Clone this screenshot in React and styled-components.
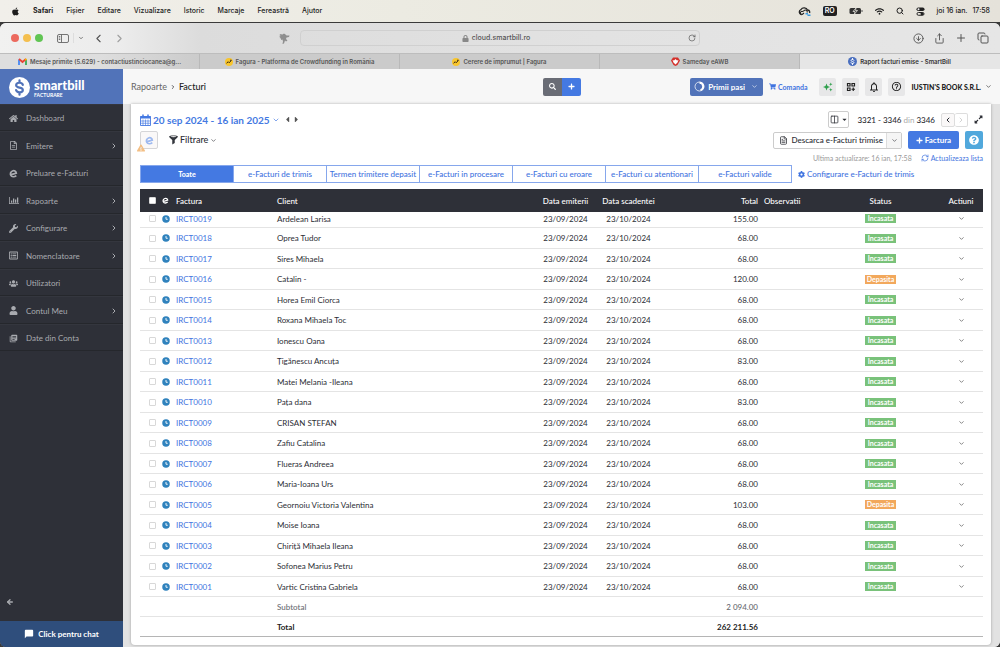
import React from 'react';
import styled, { createGlobalStyle } from 'styled-components';
import {
  FaApple, FaHome, FaRegFileAlt, FaWrench, FaRegListAlt, FaUsers, FaUser,
  FaSearch, FaPlus, FaShoppingCart, FaCaretLeft, FaCaretRight, FaCaretDown, FaExpandAlt,
  FaQuestionCircle, FaCog, FaExclamationTriangle, FaWifi, FaLock,
} from 'react-icons/fa';
import { MdLibraryBooks, MdChatBubble, MdHelpOutline, MdNotificationsNone } from 'react-icons/md';
import {
  ChevronDown, ChevronLeft, ChevronRight, ArrowLeft, RotateCw, RefreshCw,
  CircleArrowDown, Share, Plus, Copy, Columns2, FileText, Search,
} from 'lucide-react';

const menus = ['Fișier', 'Editare', 'Vizualizare', 'Istoric', 'Marcaje', 'Fereastră', 'Ajutor'];

const navItems = [
  { label: 'Dashboard', icon: <FaHome /> },
  { label: 'Emitere', icon: <FaRegFileAlt />, more: true },
  { label: 'Preluare e-Facturi', icon: <LetterE /> },
  { label: 'Rapoarte', icon: <BarsIcon />, more: true },
  { label: 'Configurare', icon: <FaWrench />, more: true },
  { label: 'Nomenclatoare', icon: <FaRegListAlt />, more: true },
  { label: 'Utilizatori', icon: <FaUsers /> },
  { label: 'Contul Meu', icon: <FaUser />, more: true },
  { label: 'Date din Conta', icon: <MdLibraryBooks /> },
];

const filters = [
  'Toate',
  'e-Facturi de trimis',
  'Termen trimitere depasit',
  'e-Facturi in procesare',
  'e-Facturi cu eroare',
  'e-Facturi cu atentionari',
  'e-Facturi valide',
];

const invoices = [
  ['IRCT0019', 'Ardelean Larisa', '155.00'],
  ['IRCT0018', 'Oprea Tudor', '68.00'],
  ['IRCT0017', 'Sires Mihaela', '68.00'],
  ['IRCT0016', 'Catalin -', '120.00', 'Depasita'],
  ['IRCT0015', 'Horea Emil Ciorca', '68.00'],
  ['IRCT0014', 'Roxana Mihaela Toc', '68.00'],
  ['IRCT0013', 'Ionescu Oana', '68.00'],
  ['IRCT0012', 'Țigănescu Ancuța', '83.00'],
  ['IRCT0011', 'Matei Melania -Ileana', '68.00'],
  ['IRCT0010', 'Pața dana', '83.00'],
  ['IRCT0009', 'CRISAN STEFAN', '68.00'],
  ['IRCT0008', 'Zafiu Catalina', '68.00'],
  ['IRCT0007', 'Flueras Andreea', '68.00'],
  ['IRCT0006', 'Maria-Ioana Urs', '68.00'],
  ['IRCT0005', 'Geornoiu Victoria Valentina', '103.00', 'Depasita'],
  ['IRCT0004', 'Moise Ioana', '68.00'],
  ['IRCT0003', 'Chiriță Mihaela Ileana', '68.00'],
  ['IRCT0002', 'Sofonea Marius Petru', '68.00'],
  ['IRCT0001', 'Vartic Cristina Gabriela', '68.00'],
];

export default function App() {
  return (
    <>
      <GlobalStyle />
      <Desktop>
        <MenuBar />
        <Window>
          <BrowserBar />
          <BrowserTabs />
          <Shell>
            <Sidebar />
            <Main>
              <TopBar />
              <Stage>
                <Card>
                  <Toolbar />
                  <FilterTabs />
                  <InvoiceTable />
                </Card>
              </Stage>
            </Main>
          </Shell>
        </Window>
      </Desktop>
    </>
  );
}

function MenuBar() {
  return (
    <MacBar>
      <MacMenus>
        <FaApple size={9} />
        <b>Safari</b>
        {menus.map((m) => <span key={m}>{m}</span>)}
      </MacMenus>
      <MacStatus>
        <CloudIcon />
        <Lang>RO</Lang>
        <BatteryIcon />
        <FaWifi size={9} />
        <Search size={8} strokeWidth={3} />
        <ControlIcon />
        <Clock><span>joi 16 ian.</span><span>17:58</span></Clock>
      </MacStatus>
    </MacBar>
  );
}

function BrowserBar() {
  return (
    <SafariBar>
      <SafariSide>
        <Lights>
          <Light $color="#ec6a5e" />
          <Light $color="#f4bf4f" />
          <Light $color="#61c554" />
        </Lights>
        <PlainButton aria-label="Bară laterală"><PanelIcon /></PlainButton>
        <Divider />
        <ChevronDown size={6} strokeWidth={3} />
        <NavArrows>
          <PlainButton aria-label="Înapoi"><ChevronLeft size={13} /></PlainButton>
          <PlainButton aria-label="Înainte" $faded><ChevronRight size={13} /></PlainButton>
        </NavArrows>
        <BirdSlot><BirdIcon /></BirdSlot>
      </SafariSide>
      <Address>
        <AddressText><FaLock size={7} />cloud.smartbill.ro</AddressText>
        <RotateCw size={8} />
      </Address>
      <SafariSide $end>
        <PlainButton aria-label="Descărcări"><CircleArrowDown size={11} strokeWidth={2} /></PlainButton>
        <PlainButton aria-label="Partajează"><Share size={11} strokeWidth={2} /></PlainButton>
        <PlainButton aria-label="Filă nouă"><Plus size={12} strokeWidth={2} /></PlainButton>
        <PlainButton aria-label="Toate filele"><Copy size={12} strokeWidth={2} /></PlainButton>
      </SafariSide>
    </SafariBar>
  );
}

function BrowserTabs() {
  return (
    <TabStrip>
      <BrowserTab $first><GmailIcon />Mesaje primite (5.629) - contactiustinciocanea@g...</BrowserTab>
      <BrowserTab><FaguraIcon />Fagura - Platforma de Crowdfunding în România</BrowserTab>
      <BrowserTab><FaguraIcon />Cerere de împrumut | Fagura</BrowserTab>
      <BrowserTab><SamedayIcon />Sameday eAWB</BrowserTab>
      <BrowserTab $active><Coin size={9} fill="#4a6fbf" mark="#fff" />Raport facturi emise - SmartBill</BrowserTab>
    </TabStrip>
  );
}

function Sidebar() {
  return (
    <Side>
      <Brand>
        <Coin size={21} fill="#fff" mark="#5173b9" />
        <BrandText>
          <BrandName>smartbill</BrandName>
          <BrandSub>FACTURARE</BrandSub>
        </BrandText>
      </Brand>
      <Nav>
        {navItems.map((item) => (
          <NavItem key={item.label} href="#">
            <NavIcon>{item.icon}</NavIcon>
            <span>{item.label}</span>
            {item.more && <ChevronRight size={8} strokeWidth={3} />}
          </NavItem>
        ))}
      </Nav>
      <Collapse aria-label="Restrânge meniul"><ArrowLeft size={8} strokeWidth={4} /></Collapse>
      <Chat><MdChatBubble size={10} />Click pentru chat</Chat>
    </Side>
  );
}

function TopBar() {
  return (
    <Top>
      <Crumbs>
        <a href="#">Rapoarte</a>
        <ChevronRight size={6} strokeWidth={3} />
        <b>Facturi</b>
      </Crumbs>
      <SearchGroup>
        <GroupButton aria-label="Caută"><FaSearch size={7} /></GroupButton>
        <GroupButton aria-label="Adaugă" $blue><FaPlus size={7} /></GroupButton>
      </SearchGroup>
      <TopRight>
        <FirstSteps><RingIcon />Primii pasi<ChevronDown size={7} /></FirstSteps>
        <Order href="#"><FaShoppingCart size={7} />Comanda</Order>
        <IconRow>
          <SquareButton aria-label="Noutăți"><SparkIcon /></SquareButton>
          <SquareButton aria-label="Aplicații"><GridIcon /></SquareButton>
          <SquareButton aria-label="Notificări"><MdNotificationsNone size={12} /></SquareButton>
          <SquareButton aria-label="Ajutor"><MdHelpOutline size={11} /></SquareButton>
        </IconRow>
        <Company>{"IUSTIN'S BOOK S.R.L."}<ChevronDown size={7} /></Company>
      </TopRight>
    </Top>
  );
}

function Toolbar() {
  return (
    <Tools>
      <ToolsLeft>
        <Line>
          <Period><CalendarIcon />20 sep 2024 - 16 ian 2025<ChevronDown size={8} /></Period>
          <Steps><FaCaretLeft size={9} /><FaCaretRight size={9} /></Steps>
        </Line>
        <Line $tall>
          <EButton aria-label="e-Factura">
            <LetterE />
            <Warn><FaExclamationTriangle size={8} /></Warn>
          </EButton>
          <Filter><FunnelIcon />Filtrare<ChevronDown size={7} /></Filter>
        </Line>
      </ToolsLeft>
      <ToolsRight>
        <Line $end>
          <ColumnsButton aria-label="Coloane"><Columns2 size={9} /><FaCaretDown size={7} /></ColumnsButton>
          <Range>3321 - 3346 <i>din</i> 3346</Range>
          <Pager>
            <button aria-label="Pagina anterioară"><ChevronLeft size={8} strokeWidth={3} /></button>
            <button aria-label="Pagina următoare" disabled><ChevronRight size={8} /></button>
          </Pager>
          <FaExpandAlt size={9} />
        </Line>
        <Line $end $tall>
          <Split>
            <SplitMain><FileText size={9} />Descarca e-Facturi trimise</SplitMain>
            <SplitMore aria-label="Mai multe"><ChevronDown size={7} /></SplitMore>
          </Split>
          <NewInvoice><FaPlus size={7} />Factura</NewInvoice>
          <HelpButton aria-label="Ajutor"><FaQuestionCircle size={10} /></HelpButton>
        </Line>
        <Updated>
          <span>Ultima actualizare: 16 ian, 17:58</span>
          <a href="#"><RefreshCw size={8} />Actualizeaza lista</a>
        </Updated>
      </ToolsRight>
    </Tools>
  );
}

function FilterTabs() {
  return (
    <Filters>
      <FilterGroup>
        {filters.map((f, i) => <FilterTab key={f} $active={i === 0}>{f}</FilterTab>)}
      </FilterGroup>
      <Configure href="#"><FaCog size={7} />Configurare e-Facturi de trimis</Configure>
    </Filters>
  );
}

function InvoiceTable() {
  return (
    <Table>
      <colgroup>
        <Col $w={19} /><Col $w={14} /><Col $w={101} /><col />
        <Col $w={61} /><Col $w={65} /><Col $w={100} /><Col $w={61} />
        <Col $w={117} /><Col $w={44} />
      </colgroup>
      <thead>
        <tr>
          <Th $align="right"><Check type="checkbox" aria-label="Selectează tot" /></Th>
          <Th><LetterE /></Th>
          <Th>Factura</Th>
          <Th>Client</Th>
          <Th $align="center">Data emiterii</Th>
          <Th $align="center">Data scadentei</Th>
          <Th $align="right">Total</Th>
          <Th>Observatii</Th>
          <Th $align="center">Status</Th>
          <Th $align="center">Actiuni</Th>
        </tr>
      </thead>
      <tbody>
        {invoices.map(([id, client, total, status = 'Incasata']) => (
          <Row key={id}>
            <Td $align="right"><Check type="checkbox" aria-label={id} /></Td>
            <Td><ClockIcon /></Td>
            <Td><a href="#">{id}</a></Td>
            <Td>{client}</Td>
            <Td $align="center">23/09/2024</Td>
            <Td $align="center">23/10/2024</Td>
            <Td $align="right">{total}</Td>
            <Td />
            <Td $align="center"><Badge $late={status === 'Depasita'}>{status}</Badge></Td>
            <Td $align="center"><RowMenu aria-label={`Actiuni ${id}`}><ChevronDown size={7} strokeWidth={3} /></RowMenu></Td>
          </Row>
        ))}
      </tbody>
      <tfoot>
        <SumRow>
          <Td colSpan={3} /><Td>Subtotal</Td><Td colSpan={2} />
          <Td $align="right">2 094.00</Td><Td colSpan={3} />
        </SumRow>
        <SumRow $total>
          <Td colSpan={3} /><Td>Total</Td><Td colSpan={2} />
          <Td $align="right">262 211.56</Td><Td colSpan={3} />
        </SumRow>
      </tfoot>
    </Table>
  );
}

// icons

function LetterE() {
  return (
    <svg width="9" height="9" viewBox="0 0 16 16" fill="none" stroke="currentColor">
      <path d="M4 10 L13 7.2 C12.4 3.6 9.2 2.2 6.3 3.4 C2.8 4.8 1.6 8.6 3.2 11.4 C4.8 14.2 9.4 14.8 13 11.6" strokeWidth="3" />
    </svg>
  );
}

function BarsIcon() {
  return (
    <svg width="10" height="9" viewBox="0 0 20 16" fill="currentColor">
      <path d="M0 1h1.5v12.5H20V15H0zM4 8h2.500v4.500H4zM8 4h2.500v8.500H8zM12 6h2.500v6.500H12zM16 2h2.500v10.500H16z" />
    </svg>
  );
}

function Coin({ size, fill, mark }) {
  return (
    <svg width={size} height={size} viewBox="0 0 22 22">
      <circle cx="11" cy="11" r="11" fill={fill} />
      <path d="M14.500 8.200C14 6.600 12.700 6 11 6c-2 0-3.500 1-3.500 2.600 0 3.400 7 1.600 7 5 0 1.600-1.500 2.500-3.500 2.500-1.800 0-3.200-.8-3.600-2.400M11 3.500V6M11 16v2.500" fill="none" stroke={mark} strokeWidth="2.300" strokeLinecap="round" />
    </svg>
  );
}

function CloudIcon() {
  return (
    <svg width="13" height="9" viewBox="0 0 26 18" fill="none">
      <path d="M7 15.500a5.500 5.500 0 0 1-1-10.500C9 0 17 1 19 6c4 0 5 4 4 6" stroke="#222" strokeWidth="2.600" />
      <path d="M12 12 9 14.500a3 3 0 1 1 0-5.500c2 0 3-3 6-3s4 3 3 5" stroke="#222" strokeWidth="2.200" />
      <path d="M15 12h5v3h5v3h-6v-3h-4z" fill="#3d9be0" />
    </svg>
  );
}

function BatteryIcon() {
  return (
    <svg width="14" height="8" viewBox="0 0 28 16">
      <rect x="1" y="2" width="23" height="12" rx="3" fill="#333" />
      <path d="M26 6v4" stroke="#555" strokeWidth="2" />
      <path d="M14 2 8 9h4l-1 5 6-7h-4z" fill="#333" stroke="#ebe9e2" strokeWidth="1.500" />
    </svg>
  );
}

function ControlIcon() {
  return (
    <svg width="9" height="9" viewBox="0 0 18 18">
      <rect x="1" y="1" width="16" height="7" rx="3.500" fill="#222" />
      <circle cx="5" cy="4.500" r="2" fill="#eee" />
      <rect x="2" y="11" width="14" height="5.500" rx="2.700" fill="none" stroke="#222" strokeWidth="2" />
      <circle cx="12" cy="13.700" r="3" fill="#222" />
    </svg>
  );
}

function PanelIcon() {
  return (
    <svg width="12" height="9" viewBox="0 0 24 18" fill="none" stroke="#666" strokeWidth="1.800">
      <rect x="1" y="1" width="22" height="16" rx="3" />
      <path d="M9 1v16M3.500 5h3M3.500 8h3M3.500 11h3" />
    </svg>
  );
}

function BirdIcon() {
  return (
    <svg width="11" height="11" viewBox="0 0 22 22" fill="#8f8f8f">
      <path d="M1 2l6 1 3-2 3 2 2 2 6 0-1 3-5 1-1 3 3 3-3 2-2-2-2 6-3 1 1-5-1-4-3 1 0-3-3-1 2-2-3-2 3-1z" />
    </svg>
  );
}

function GmailIcon() {
  return (
    <svg width="9" height="7" viewBox="0 0 18 14" fill="none" strokeWidth="3.500">
      <path d="M2 14V3" stroke="#4285f4" />
      <path d="M16 14V3" stroke="#34a853" />
      <path d="M2 2l7 6 7-6" stroke="#ea4335" />
      <path d="M14.500 4 17 2" stroke="#fbbc04" />
    </svg>
  );
}

function FaguraIcon() {
  return (
    <svg width="8" height="8" viewBox="0 0 16 16">
      <circle cx="8" cy="8" r="8" fill="#f8c52c" />
      <path d="M3 10.500l3.500-3 2 2L12.500 5M10 4.500h3" fill="none" stroke="#3a2d18" strokeWidth="2" />
    </svg>
  );
}

function SamedayIcon() {
  return (
    <svg width="9" height="9" viewBox="0 0 18 18">
      <path d="M4 1h10l4 6-5 9-4 2-4-2L0 7z" fill="#d4302b" />
      <path d="M3 6l3 1 3-3 3 3 3-1-2 5-4 4-4-4z" fill="#fff" />
    </svg>
  );
}

function RingIcon() {
  return (
    <svg width="11" height="11" viewBox="0 0 22 22" fill="none" stroke="#fff">
      <circle cx="11" cy="11" r="9" strokeWidth="1.500" />
      <path d="M11 3.500a7.500 7.500 0 0 1 2 14.700" strokeWidth="4" />
    </svg>
  );
}

function SparkIcon() {
  return (
    <svg width="10" height="10" viewBox="0 0 20 20" fill="#2fa04c">
      <path d="M7 3l2 5 5 2-5 2-2 5-2-5-5-2 5-2z" />
      <path d="M15.500 1l1 2.500L19 4.500l-2.500 1-1 2.500-1-2.500-2.500-1 2.500-1zM15.500 12l1 2.500 2.500 1-2.500 1-1 2.500-1-2.500-2.500-1 2.500-1z" />
    </svg>
  );
}

function GridIcon() {
  return (
    <svg width="10" height="10" viewBox="0 0 20 20" fill="none" stroke="#222" strokeWidth="2.400">
      <path d="M3 3h5v5H3zM12 3h5v5h-5zM3 12h5v5H3zM14.500 11v7M11 14.500h7" />
    </svg>
  );
}

function CalendarIcon() {
  return (
    <svg width="11" height="12" viewBox="0 0 22 24" fill="none" stroke="currentColor">
      <path d="M1 5h20v18H1z" strokeWidth="1.800" />
      <path d="M1 6.500h20" strokeWidth="5" />
      <path d="M6 11v12M11 11v12M16 11v12M1 14h20M1 18.500h20" strokeWidth="1.300" />
      <path d="M6 1v6M16 1v6" strokeWidth="3" />
    </svg>
  );
}

function FunnelIcon() {
  return (
    <svg width="9" height="10" viewBox="0 0 18 20">
      <path d="M0 3C0 0 18 0 18 3c0 2-5 5-6.500 7v6l-5 3v-9C5 8 0 5 0 3z" fill="#33363d" />
      <ellipse cx="9" cy="3.200" rx="6" ry="1.200" fill="#ddd" />
    </svg>
  );
}

function ClockIcon() {
  return (
    <svg width="8" height="8" viewBox="0 0 16 16">
      <circle cx="8" cy="8" r="7.500" fill="#2f82bd" />
      <path d="M8 4v4.500h3.500" fill="none" stroke="#fff" strokeWidth="1.800" />
    </svg>
  );
}

const GlobalStyle = createGlobalStyle`
  * {
    box-sizing: border-box;
  }
  body {
    margin: 0;
    background: #3a3a3a;
    color: #2b2d34;
    font-family: Lato, "Liberation Sans", sans-serif;
    font-size: 8px;
    line-height: 10px;
  }
  button {
    border: 0;
    padding: 0;
    background: none;
    color: inherit;
    font: inherit;
    cursor: pointer;
  }
  a {
    color: #3f73e0;
    text-decoration: none;
  }
  svg {
    display: block;
    flex: none;
  }
`;

const Desktop = styled.div`
  display: flex;
  flex-direction: column;
  min-height: 100vh;
`;

const MacBar = styled.div`
  display: flex;
  justify-content: space-between;
  align-items: center;
  height: 22px;
  padding: 0 10px 0 11px;
  background: linear-gradient(90deg, #f1efea, #ecebe2 40%, #e5e2da);
  color: #1d1d1d;
  font-family: Inter, "Liberation Sans", sans-serif;
  font-size: 7px;
  font-weight: 500;
`;

const MacMenus = styled.div`
  display: flex;
  align-items: center;
  gap: 13px;
`;

const MacStatus = styled.div`
  display: flex;
  align-items: center;
  gap: 12px;
`;

const Lang = styled.span`
  padding: 0 2px;
  border-radius: 2px;
  background: #222;
  color: #fff;
  font-weight: 600;
`;

const Clock = styled.span`
  display: flex;
  gap: 5px;
`;

const Window = styled.div`
  display: flex;
  flex-direction: column;
  flex: 1;
  margin-top: 1px;
  border-radius: 6px;
  overflow: hidden;
  background: #e2e2e2;
`;

const SafariBar = styled.div`
  display: flex;
  align-items: center;
  height: 30px;
  padding: 0 11px;
  background: linear-gradient(90deg, #f1f1f0, #ececec 12%, #dcdcdc 20%, #e2e2e2 60%, #e6e6e6);
  color: #555;
  font-family: Inter, "Liberation Sans", sans-serif;
  font-size: 7px;
  font-weight: 500;
`;

const SafariSide = styled.div`
  display: flex;
  flex: 1;
  align-items: center;
  justify-content: ${(p) => (p.$end ? 'flex-end' : 'flex-start')};
  gap: ${(p) => (p.$end ? '10px' : '4px')};
`;

const Lights = styled.div`
  display: flex;
  gap: 4px;
  margin-right: 10px;
`;

const Light = styled.span`
  width: 8px;
  height: 8px;
  border-radius: 50%;
  background: ${(p) => p.$color};
`;

const PlainButton = styled.button`
  opacity: ${(p) => (p.$faded ? 0.5 : 1)};
`;

const Divider = styled.span`
  width: 1px;
  height: 10px;
  background: #ddd;
`;

const NavArrows = styled.div`
  display: flex;
  gap: 8px;
  margin-left: 4px;
`;

const BirdSlot = styled.div`
  margin: 0 10px 0 auto;
`;

const Address = styled.div`
  display: flex;
  align-items: center;
  width: 41%;
  height: 16px;
  padding: 0 3px;
  border: 1px solid #d0d0d0;
  border-radius: 4px;
`;

const AddressText = styled.div`
  display: flex;
  flex: 1;
  align-items: center;
  justify-content: center;
  gap: 3px;
  svg { color: #888; }
`;

const TabStrip = styled.div`
  display: flex;
  height: 16px;
  border-top: 1px solid #bdbdbd;
`;

const BrowserTab = styled.div`
  display: flex;
  flex: 1;
  align-items: center;
  justify-content: center;
  gap: 3px;
  min-width: 0;
  border-right: 1px solid ${(p) => (p.$active ? 'transparent' : '#b9b9b9')};
  background: ${(p) => {
    if (p.$active) return '#e6e6e6';
    return p.$first ? 'linear-gradient(90deg, #dedede 50%, #cbcbcb)' : '#cbcbcb';
  }};
  color: ${(p) => (p.$active ? '#333' : '#555')};
  font-family: Inter, "Liberation Sans", sans-serif;
  font-size: 6px;
  font-weight: 600;
  white-space: nowrap;
`;

const Shell = styled.div`
  display: flex;
  flex: 1;
`;

const Side = styled.aside`
  display: flex;
  flex-direction: column;
  width: 123px;
  background: #2e3038;
  color: #a9abb0;
`;

const Brand = styled.div`
  display: flex;
  align-items: center;
  gap: 4px;
  height: 35px;
  padding: 1px 0 0 9px;
  background: #5173b9;
  color: #fff;
`;

const BrandText = styled.div`
  display: flex;
  flex-direction: column;
  padding-top: 2px;
`;

const BrandName = styled.span`
  font-size: 13px;
  font-weight: 900;
  line-height: 13px;
`;

const BrandSub = styled.span`
  font-size: 5px;
  font-weight: 700;
  line-height: 6px;
`;

const Nav = styled.nav`
  display: flex;
  flex-direction: column;
`;

const NavItem = styled.a`
  display: flex;
  align-items: center;
  height: 27px;
  padding: 2px 5px 0 8px;
  border-bottom: 1px solid #25272c;
  box-shadow: inset 0 1px #34363e;
  color: inherit;
  &:nth-child(even) { height: 28px; }
  span:nth-child(2) { flex: 1; }
`;

const NavIcon = styled.span`
  display: flex;
  justify-content: center;
  width: 11px;
  margin-right: 7px;
  font-size: 9px;
`;

const Collapse = styled.button`
  margin: auto 0 15px 6px;
  align-self: flex-start;
`;

const Chat = styled.button`
  display: flex;
  align-items: center;
  justify-content: center;
  gap: 4px;
  height: 26px;
  background: #2f4e7c;
  color: #fff;
  font-weight: 700;
`;

const Main = styled.main`
  display: flex;
  flex: 1;
  flex-direction: column;
  min-width: 0;
`;

const Top = styled.header`
  display: flex;
  align-items: center;
  height: 35px;
  padding: 0 8px;
  background: #f7f7f7;
`;

const Crumbs = styled.div`
  display: flex;
  flex: 1;
  align-items: center;
  gap: 3px;
  font-size: 9px;
  a { color: #666; }
  b { color: #222; font-weight: 500; }
`;

const SearchGroup = styled.div`
  display: flex;
  border-radius: 2px;
  overflow: hidden;
`;

const GroupButton = styled.button`
  display: grid;
  place-items: center;
  width: 19px;
  height: 18px;
  background: ${(p) => (p.$blue ? '#4479e2' : '#696c75')};
  color: #fff;
`;

const TopRight = styled.div`
  display: flex;
  flex: 1;
  align-items: center;
  justify-content: flex-end;
  gap: 6px;
  white-space: nowrap;
`;

const FirstSteps = styled.button`
  display: flex;
  align-items: center;
  gap: 3px;
  height: 18px;
  padding: 0 5px 0 4px;
  border-radius: 2px;
  background: #5173b9;
  color: #fff;
  font-weight: 700;
  svg:last-child { margin-left: 3px; }
`;

const Order = styled.a`
  display: flex;
  align-items: center;
  gap: 2px;
  font-size: 7px;
  font-weight: 700;
`;

const IconRow = styled.div`
  display: flex;
  gap: 6px;
  margin-left: 6px;
`;

const SquareButton = styled.button`
  display: grid;
  place-items: center;
  width: 17px;
  height: 18px;
  border-radius: 2px;
  background: #e7e7e8;
  color: #222;
`;

const Company = styled.button`
  display: flex;
  align-items: center;
  gap: 4px;
  color: #222;
  font-size: 7px;
  font-weight: 900;
`;

const Stage = styled.div`
  flex: 1;
  padding: 0 9px 2px 8px;
  background: #e2e2e2;
`;

const Card = styled.section`
  height: 100%;
  padding: 7px 8px 7px 9px;
  border-radius: 0 0 4px 4px;
  background: #fff;
  box-shadow: 0 0 3px rgba(0, 0, 0, 0.3);
`;

const Tools = styled.div`
  display: flex;
  justify-content: space-between;
`;

const ToolsLeft = styled.div`
  display: flex;
  flex-direction: column;
  gap: 3px;
`;

const ToolsRight = styled(ToolsLeft)`
  align-items: flex-end;
`;

const Line = styled.div`
  display: flex;
  align-items: center;
  justify-content: ${(p) => (p.$end ? 'flex-end' : 'flex-start')};
  gap: 6px;
  height: ${(p) => (p.$tall ? '18px' : '17px')};
`;

const Period = styled.button`
  display: flex;
  align-items: center;
  gap: 2px;
  color: #4479e2;
  font-size: 10px;
  font-weight: 700;
`;

const Steps = styled.div`
  display: flex;
  margin-left: -3px;
  color: #555;
`;

const EButton = styled.button`
  position: relative;
  display: grid;
  place-items: center;
  width: 18px;
  height: 18px;
  border: 1px solid #d5d5d8;
  border-radius: 2px;
  background: #faf8f8;
  color: #9db9f0;
`;

const Warn = styled.span`
  position: absolute;
  bottom: -4px;
  left: -4px;
  color: #f3bf85;
`;

const Filter = styled.button`
  display: flex;
  align-items: center;
  gap: 2px;
  margin-left: 5px;
  font-size: 9px;
  font-weight: 500;
`;

const ColumnsButton = styled.button`
  display: flex;
  align-items: center;
  justify-content: center;
  gap: 2px;
  width: 21px;
  height: 17px;
  margin-right: 2px;
  border: 1px solid #ccc;
  border-radius: 2px;
`;

const Range = styled.span`
  font-weight: 500;
  i { color: #aaa; font-style: normal; font-weight: 400; }
`;

const Pager = styled.div`
  display: flex;
  button {
    display: grid;
    place-items: center;
    width: 14px;
    height: 14px;
    border: 1px solid #ddd;
    border-radius: 2px;
  }
  button:first-child { background: #faf8f8; }
  button:last-child { width: 13px; border-left: 0; color: #bbb; }
`;

const Split = styled.div`
  display: flex;
  height: 17px;
  border: 1px solid #ccc;
  border-radius: 2px;
`;

const SplitMain = styled.button`
  display: flex;
  align-items: center;
  gap: 3px;
  padding: 0 3px 0 5px;
  font-weight: 500;
`;

const SplitMore = styled.button`
  display: grid;
  place-items: center;
  width: 15px;
  border-left: 1px solid #ddd;
  background: #f5f5f5;
`;

const NewInvoice = styled.button`
  display: flex;
  align-items: center;
  justify-content: center;
  gap: 2px;
  width: 51px;
  height: 18px;
  border-radius: 2px;
  background: #4479e2;
  color: #fff;
  font-weight: 700;
`;

const HelpButton = styled.button`
  display: grid;
  place-items: center;
  width: 18px;
  height: 18px;
  border-radius: 2px;
  background: #51a8dc;
  color: #fff;
`;

const Updated = styled.div`
  display: flex;
  gap: 9px;
  margin: 1px 0 2px;
  color: #999;
  font-size: 7px;
  a {
    display: flex;
    align-items: center;
    gap: 2px;
  }
`;

const Filters = styled.div`
  display: flex;
  align-items: center;
  gap: 6px;
`;

const FilterGroup = styled.div`
  display: flex;
  width: 652px;
  border: 1px solid #86a7ec;
`;

const FilterTab = styled.button`
  flex: 1 1 0;
  height: 16px;
  border-right: 1px solid #86a7ec;
  background: ${(p) => (p.$active ? '#4479e2' : '#fff')};
  color: ${(p) => (p.$active ? '#fff' : '#3f73e0')};
  font-size: ${(p) => (p.$active ? '7px' : '8px')};
  font-weight: ${(p) => (p.$active ? 900 : 500)};
  white-space: nowrap;
  &:last-child { border-right: 0; }
`;

const Configure = styled.a`
  display: flex;
  align-items: center;
  gap: 2px;
  font-weight: 500;
  white-space: nowrap;
`;

const Table = styled.table`
  width: 100%;
  margin-top: 6px;
  border-spacing: 0;
  table-layout: fixed;
`;

const Col = styled.col`
  width: ${(p) => p.$w}px;
`;

const Th = styled.th`
  height: 23px;
  padding: 0 3px;
  background: #2e3038;
  color: #fff;
  font-size: 8px;
  font-weight: 500;
  text-align: ${(p) => p.$align || 'left'};
  white-space: nowrap;
  svg { width: 7px; }
`;

const Td = styled.td`
  height: 20px;
  padding: 0 3px;
  border-bottom: 1px solid #e4e4e4;
  text-align: ${(p) => p.$align || 'left'};
  white-space: nowrap;
`;

// the first row is partly scrolled under the header
const Row = styled.tr`
  &:nth-child(even) td { height: 21px; }
  &:first-child td {
    height: 16px;
    padding-bottom: 2px;
  }
`;

const SumRow = styled.tr`
  td {
    border-color: ${(p) => (p.$total ? '#b5b5b5' : '#e4e4e4')};
    color: ${(p) => (p.$total ? '#222' : '#6b6d73')};
    font-weight: ${(p) => (p.$total ? 700 : 500)};
  }
`;

const Check = styled.input`
  display: block;
  width: 7px;
  height: 7px;
  margin: 0 0 0 auto;
  border: 1px solid #d8d8d8;
  border-radius: 1px;
  background: #fff;
  appearance: none;
`;

const Badge = styled.span`
  display: block;
  width: 31px;
  margin: 0 auto;
  background: ${(p) => (p.$late ? '#f2a85c' : '#79c27a')};
  color: #fff;
  font-size: 7px;
  font-weight: 700;
  line-height: 9px;
`;

const RowMenu = styled.button`
  display: block;
  margin: 0 auto;
  color: #777;
`;
